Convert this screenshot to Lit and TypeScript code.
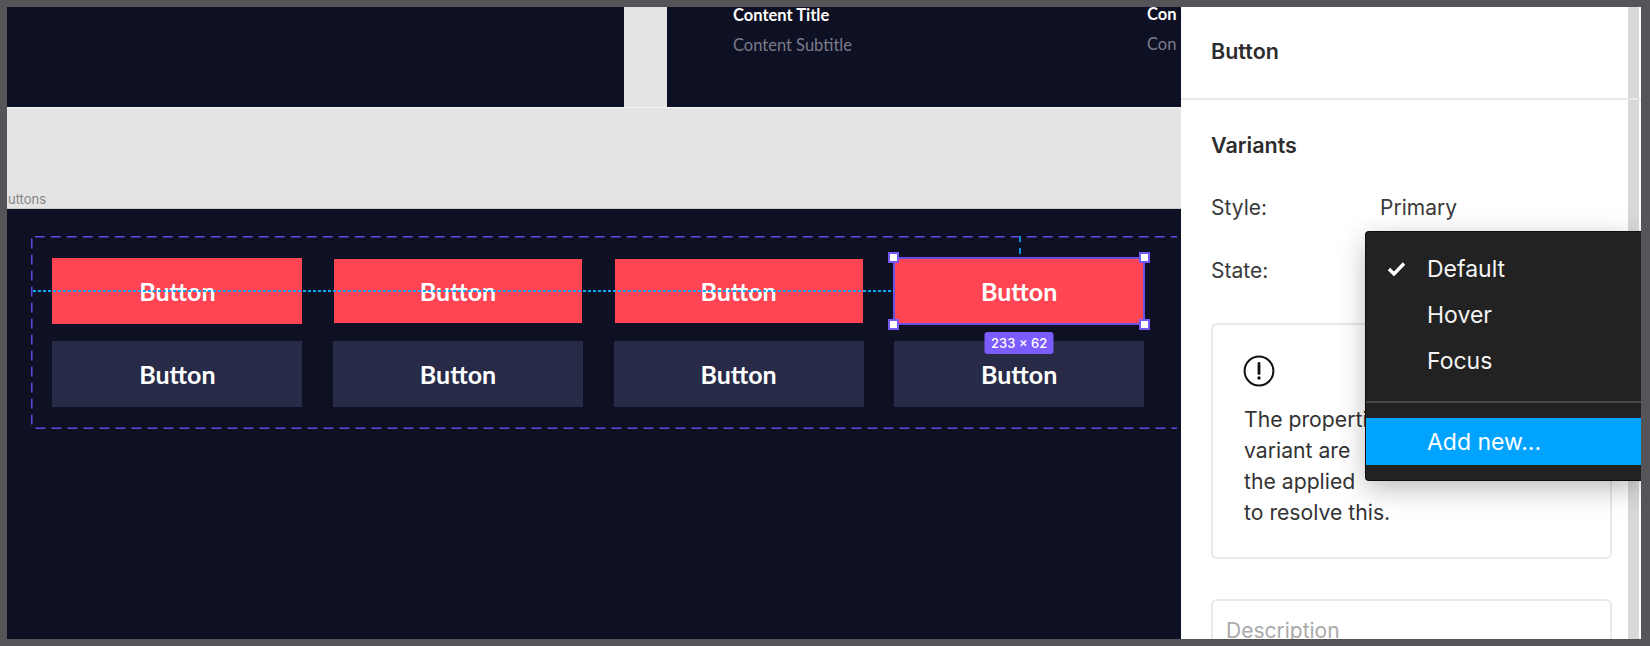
import { LitElement, html, css } from "lit";
import { customElement } from "lit/decorators.js";

@customElement("app-root")
export class AppRoot extends LitElement {
  static styles = css`
    :host { display: block; width: 1650px; height: 646px; overflow: hidden; box-sizing: border-box;
      background: #555459; padding: 7px 9px 7px 7px; font-family: Inter, "Liberation Sans", sans-serif; }
    .shell { display: flex; height: 632px; }
    .canvas { width: 1174px; flex: none; display: flex; flex-direction: column; background: #e4e4e4; }
    .top { display: flex; gap: 43px; height: 101px; flex: none; border-bottom: 1px solid #f4f4f4; box-sizing: border-box; }
    .tile { background: #0e1023; font-family: Lato, "Noto Sans", sans-serif; }
    .tile.a { width: 617px; flex: none; }
    .tile.b { flex: 1; display: flex; padding-left: 66px; gap: 295px; min-width: 0; }
    .tile h4 { margin: 0; font-size: 16.5px; line-height: 20px; color: #fff; font-weight: 700; white-space: nowrap; }
    .tile p { margin: 10px 0 0; font-size: 16.5px; line-height: 20px; color: #7b7c8b; white-space: nowrap; }
    .ct { margin-top: -2px; }
    .cut { margin-top: -3px; }
    .band { height: 100px; flex: none; display: flex; align-items: flex-end; }
    .band span { font-size: 13px; line-height: 18px; color: #85858a; padding: 0 0 0 1px; }
    .frame { flex: 1; background: #0e1023; padding: 27px 0 0 24px; border-top: 1px solid #c9c9c9; }
    .selection { position: relative; width: 1146px; height: 193px; box-sizing: border-box; padding: 22px 0 0 21.4px; }
    .dash { position: absolute; inset: 0; width: 1146px; height: 193px; overflow: hidden; }
    .grid { display: grid; grid-template-columns: repeat(4, 250px); grid-auto-rows: 66px; column-gap: 30.6px; row-gap: 17px; position: relative; }
    .btn { display: flex; align-items: center; justify-content: center; font-family: Lato, "Noto Sans", sans-serif;
      font-weight: 700; font-size: 25px; color: #fff; box-sizing: border-box; }
    .primary { background: #ff4554; }
    .inset { border: 1px solid #0e1023; background: #ff4554; }
    .secondary { background: #272b48; }
    .selected { position: relative; border: 1.5px solid #0e1023; outline: 2px solid #6a50e6; outline-offset: -1px; }
    .h { position: absolute; width: 11px; height: 11px; box-sizing: border-box; background: #fff; border: 2px solid #7659f5; }
    .tl { left: -7px; top: -7px; } .tr { right: -7px; top: -7px; }
    .bl { left: -7px; bottom: -7px; } .br { right: -7px; bottom: -7px; }
    .badge { position: absolute; left: 50%; bottom: -31px; transform: translateX(-50%); width: 69px; height: 22px;
      border-radius: 3px; background: #7a5cff; color: #fff; font: 500 13px/22px Inter, sans-serif; text-align: center; z-index: 2; white-space: nowrap; }
    .guide-h { position: absolute; left: 2px; top: 54px; width: 861px; height: 2px;
      background: repeating-linear-gradient(90deg, #12a4f4 0 3px, transparent 3px 5px); }
    .guide-v { position: absolute; left: 988px; top: 0; height: 18px; border-left: 2px dashed #0a8fd8; }
    .panel { position: relative; flex: 1; background: #fff; display: flex; flex-direction: column; overflow: hidden; color: #2c2c2c; }
    .scroll { position: absolute; right: 2px; top: 0; bottom: 0; width: 11px; background: #d8d8d8; }
    .head { height: 91px; flex: none; border-bottom: 2px solid #e8e8e8; padding: 0 0 4px 30px; display: flex; align-items: center; font-size: 21.5px; font-weight: 600; line-height: 24px; position: relative; box-sizing: border-box; height: 93px; }
    .body { position: relative; padding: 31px 29px 0 30px; font-size: 21px; }
    .body h3 { margin: 0; font-size: 21.5px; font-weight: 600; line-height: 28px; }
    .row { display: grid; grid-template-columns: 169px 1fr; line-height: 28px; color: #3a3a3a; }
    .r1 { margin-top: 35px; }
    .r2 { margin-top: 35px; }
    .card { margin-top: 38px; height: 236px; box-sizing: border-box; border: 2px solid #e9e9e9; border-radius: 6px; padding: 30px 0 0 31px; color: #333; line-height: 31px; font-size: 21.2px; }
    .card svg { display: block; width: 32px; height: 32px; margin-bottom: 17px; margin-left: -1px; }
    .card div { white-space: nowrap; }
    .desc { margin-top: 40px; height: 90px; box-sizing: border-box; border: 2px solid #e9e9e9; border-radius: 6px; padding: 16px 0 0 13px; color: #aaa; line-height: 28px; }
    .menu { position: absolute; left: 185px; top: 132px; width: 275px; height: 248px; box-sizing: border-box; background: #222; border-radius: 3px 0 0 3px; color: #f4f4f4;
      box-shadow: 0 8px 28px rgba(0,0,0,.28), 0 0 0 1px #111; font-size: 23px; z-index: 3; padding-top: 14px; }
    .item { height: 46px; display: flex; align-items: center; padding-left: 61px; position: relative; line-height: 46px; }
    .item svg { position: absolute; left: 21px; top: 15px; width: 19px; height: 15px; }
    .sep { height: 2px; background: #484848; margin: 17px 0 15px; }
    .sel { background: #00a3ff; color: #fff; height: 47px; }
  `;

  render() {
    return html`
      <div class="shell">
        <div class="canvas">
          <div class="top">
            <div class="tile a"></div>
            <div class="tile b">
              <div class="ct"><h4>Content Title</h4><p>Content Subtitle</p></div>
              <div class="cut"><h4>Con</h4><p>Con</p></div>
            </div>
          </div>
          <div class="band"><span>uttons</span></div>
          <div class="frame">
            <div class="selection">
              <svg class="dash" viewBox="0 0 1146 193">
                <rect x="0.75" y="0.75" width="1178" height="191.5" rx="3" fill="none" stroke="#5f49e0" stroke-width="1.5" stroke-dasharray="10 6"></rect>
              </svg>
              <div class="grid">
                <div class="btn primary">Button</div>
                <div class="btn inset">Button</div>
                <div class="btn inset">Button</div>
                <div class="btn primary selected">Button
                  <i class="h tl"></i><i class="h tr"></i><i class="h bl"></i><i class="h br"></i>
                  <div class="badge">233 × 62</div>
                </div>
                <div class="btn secondary">Button</div>
                <div class="btn secondary">Button</div>
                <div class="btn secondary">Button</div>
                <div class="btn secondary">Button</div>
              </div>
              <div class="guide-h"></div>
              <div class="guide-v"></div>
            </div>
          </div>
        </div>
        <div class="panel">
          <div class="scroll"></div>
          <div class="head"><span>Button</span></div>
          <div class="body">
            <h3>Variants</h3>
            <div class="row r1"><span>Style:</span><span>Primary</span></div>
            <div class="row r2"><span>State:</span><span></span></div>
            <div class="card">
              <svg viewBox="0 0 32 32" fill="none">
                <circle cx="16" cy="16" r="14.4" stroke="#111" stroke-width="2"></circle>
                <path d="M16 8.5v10" stroke="#111" stroke-width="2.8" stroke-linecap="round"></path>
                <circle cx="16" cy="23" r="1.7" fill="#111"></circle>
              </svg>
              <div>The properties of</div>
              <div>variant are</div>
              <div>the applied</div>
              <div>to resolve this.</div>
            </div>
            <div class="desc">Description</div>
            <div class="menu">
              <div class="item">
                <svg viewBox="0 0 19 15" fill="none"><path d="M2 8l5 5L17 2.5" stroke="#fff" stroke-width="3.4"></path></svg>
                Default
              </div>
              <div class="item">Hover</div>
              <div class="item">Focus</div>
              <div class="sep"></div>
              <div class="item sel">Add new...</div>
            </div>
          </div>
        </div>
      </div>
    `;
  }
}
